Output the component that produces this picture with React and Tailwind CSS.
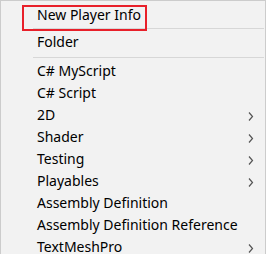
import React from "react";

const items = [
  { label: "C# MyScript" },
  { label: "C# Script" },
  { label: "2D", sub: true },
  { label: "Shader", sub: true },
  { label: "Testing", sub: true },
  { label: "Playables", sub: true },
  { label: "Assembly Definition" },
  { label: "Assembly Definition Reference" },
  { label: "TextMeshPro", sub: true },
];

const Arrow = () => (
  <svg width="6" height="9" viewBox="0 0 6 9" className="absolute right-[11px] top-[7px]">
    <path d="M1 0.5 L4.5 4.5 L1 8.5" fill="none" stroke="#555" strokeWidth="1.2" />
  </svg>
);

const Row = ({ label, sub }) => (
  <div className="relative h-[22px] pl-[36px] pb-[2px] flex items-center text-[14px] text-black leading-none">
    {label}
    {sub && <Arrow />}
  </div>
);

export default function App() {
  return (
    <div
      className="relative w-[266px] h-[254px] overflow-hidden bg-[#f2f2f2] border-t border-l border-r border-[#cccccc]"
      style={{ fontFamily: '"Noto Sans", "Liberation Sans", sans-serif' }}
    >
      <div className="pt-[4px]">
        <Row label="New Player Info" />
        <div className="ml-[32px] mr-[1px] h-px bg-[#d7d7d7] mt-[1px] mb-[3px]" />
        <Row label="Folder" />
        <div className="ml-[32px] mr-[1px] h-px bg-[#d7d7d7] mt-[3px] mb-[3px]" />
        {items.map((it) => (
          <Row key={it.label} label={it.label} sub={it.sub} />
        ))}
      </div>
      <div className="absolute left-[21px] top-[4px] w-[125px] h-[26px] border-2 border-[#e8202a]" />
    </div>
  );
}
